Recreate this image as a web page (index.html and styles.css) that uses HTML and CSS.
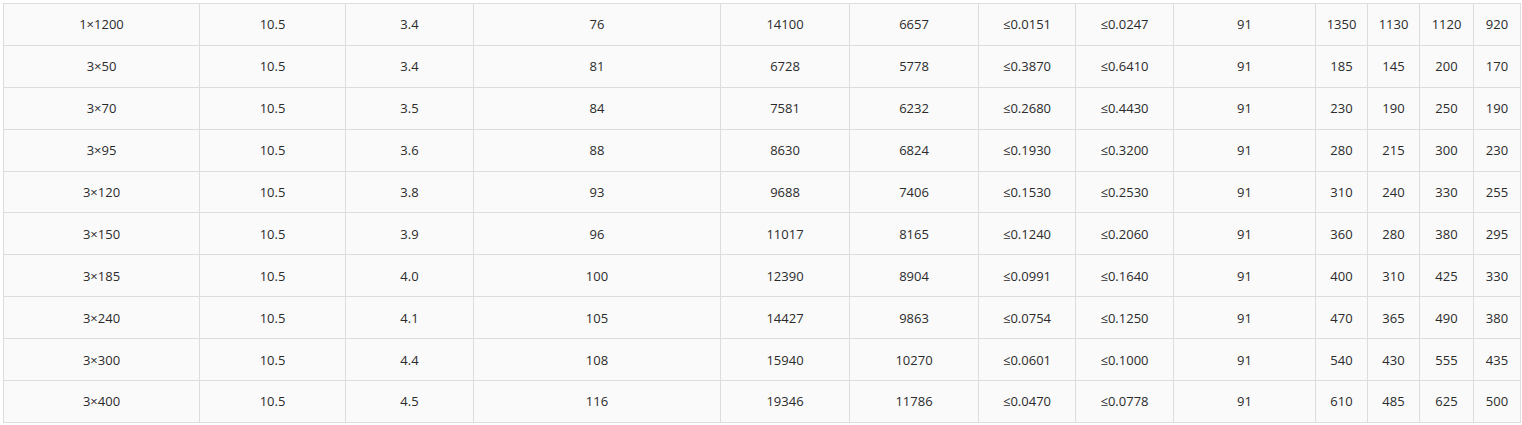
FILE: index.html
```html
<!DOCTYPE html>
<html lang="zh">
<head>
<meta charset="utf-8">
<title>Cable table</title>
<link rel="stylesheet" href="styles.css">
</head>
<body>
<table class="spec">
<colgroup>
<col class="c1"><col class="c2"><col class="c3"><col class="c4"><col class="c5"><col class="c6"><col class="c7"><col class="c8"><col class="c9"><col class="c10"><col class="c11"><col class="c12"><col class="c13">
</colgroup>
<tbody>
<tr><td>1×1200</td><td>10.5</td><td>3.4</td><td>76</td><td>14100</td><td>6657</td><td>≤0.0151</td><td>≤0.0247</td><td>91</td><td>1350</td><td>1130</td><td>1120</td><td>920</td></tr>
<tr><td>3×50</td><td>10.5</td><td>3.4</td><td>81</td><td>6728</td><td>5778</td><td>≤0.3870</td><td>≤0.6410</td><td>91</td><td>185</td><td>145</td><td>200</td><td>170</td></tr>
<tr><td>3×70</td><td>10.5</td><td>3.5</td><td>84</td><td>7581</td><td>6232</td><td>≤0.2680</td><td>≤0.4430</td><td>91</td><td>230</td><td>190</td><td>250</td><td>190</td></tr>
<tr><td>3×95</td><td>10.5</td><td>3.6</td><td>88</td><td>8630</td><td>6824</td><td>≤0.1930</td><td>≤0.3200</td><td>91</td><td>280</td><td>215</td><td>300</td><td>230</td></tr>
<tr><td>3×120</td><td>10.5</td><td>3.8</td><td>93</td><td>9688</td><td>7406</td><td>≤0.1530</td><td>≤0.2530</td><td>91</td><td>310</td><td>240</td><td>330</td><td>255</td></tr>
<tr><td>3×150</td><td>10.5</td><td>3.9</td><td>96</td><td>11017</td><td>8165</td><td>≤0.1240</td><td>≤0.2060</td><td>91</td><td>360</td><td>280</td><td>380</td><td>295</td></tr>
<tr><td>3×185</td><td>10.5</td><td>4.0</td><td>100</td><td>12390</td><td>8904</td><td>≤0.0991</td><td>≤0.1640</td><td>91</td><td>400</td><td>310</td><td>425</td><td>330</td></tr>
<tr><td>3×240</td><td>10.5</td><td>4.1</td><td>105</td><td>14427</td><td>9863</td><td>≤0.0754</td><td>≤0.1250</td><td>91</td><td>470</td><td>365</td><td>490</td><td>380</td></tr>
<tr><td>3×300</td><td>10.5</td><td>4.4</td><td>108</td><td>15940</td><td>10270</td><td>≤0.0601</td><td>≤0.1000</td><td>91</td><td>540</td><td>430</td><td>555</td><td>435</td></tr>
<tr><td>3×400</td><td>10.5</td><td>4.5</td><td>116</td><td>19346</td><td>11786</td><td>≤0.0470</td><td>≤0.0778</td><td>91</td><td>610</td><td>485</td><td>625</td><td>500</td></tr>
</tbody>
</table>
</body>
</html>
```
FILE: styles.css
```css
html, body {
  margin: 0;
  padding: 0;
  background: #ffffff;
}
body {
  padding: 3px 0 0 3px;
  font-family: "Open Sans", "Noto Sans", "Noto Sans CJK SC", sans-serif;
  font-size: 13px;
  color: #2b2b2b;
}
.spec {
  border-collapse: collapse;
  table-layout: fixed;
  width: 1517px;
  background: #fafafa;
}
.spec td {
  border: 1px solid #dddddd;
  text-align: center;
  vertical-align: middle;
  height: 40.9px;
  padding: 0;
  line-height: 18px;
}
.c1 { width: 196px; }
.c2 { width: 146px; }
.c3 { width: 128px; }
.c4 { width: 247px; }
.c5 { width: 129px; }
.c6 { width: 129px; }
.c7 { width: 97px; }
.c8 { width: 98px; }
.c9 { width: 142px; }
.c10 { width: 52px; }
.c11 { width: 52px; }
.c12 { width: 54px; }
.c13 { width: 47px; }
```
